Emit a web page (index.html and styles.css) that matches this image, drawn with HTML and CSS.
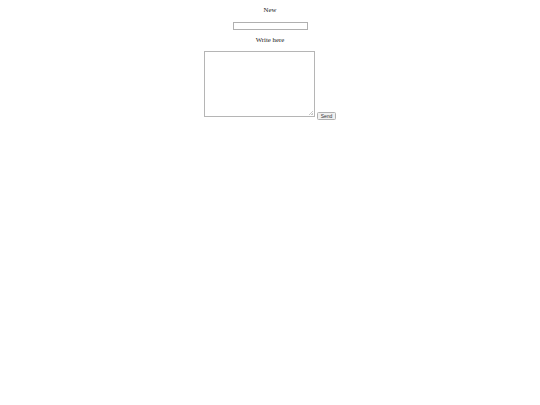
FILE: index.html
```html
<!DOCTYPE html>
<html>
<head>
<meta charset="utf-8">
<link rel="stylesheet" href="styles.css">
</head>
<body>
<div class="page">
  <p class="label label-top">New</p>
  <input class="title-input" type="text">
  <p class="label label-mid">Write here</p>
  <div class="compose">
    <div class="message-box">
      <textarea class="message"></textarea>
      <span class="grip"></span>
    </div>
    <button class="send">Send</button>
  </div>
</div>
</body>
</html>
```
FILE: styles.css
```css
html, body {
  margin: 0;
  padding: 0;
  background: #ffffff;
}
.page {
  width: 540px;
  display: flex;
  flex-direction: column;
  align-items: center;
  font-family: "Liberation Serif", "Times New Roman", serif;
  color: #222;
}
.label {
  margin: 0;
  font-size: 6.8px;
  line-height: 8px;
  text-align: center;
}
.label-top {
  margin-top: 6px;
}
.title-input {
  box-sizing: border-box;
  width: 75px;
  height: 8px;
  margin: 8px 0 0;
  padding: 0 1px;
  border: 1px solid #b0b0b0;
  font-size: 5px;
  outline: none;
}
.label-mid {
  margin-top: 6px;
}
.compose {
  margin-top: 7px;
  display: flex;
  align-items: flex-end;
  gap: 2px;
}
.message-box {
  position: relative;
  margin-bottom: 3px;
  line-height: 0;
}
.message {
  box-sizing: border-box;
  display: block;
  width: 111px;
  height: 66px;
  margin: 0;
  padding: 1px;
  border: 1px solid #b5b5b5;
  font-size: 6px;
  outline: none;
  resize: none;
}
.grip {
  position: absolute;
  right: 2px;
  bottom: 2px;
  width: 4px;
  height: 4px;
  background: linear-gradient(135deg, transparent 45%, #c8c8c8 45%, #c8c8c8 60%, transparent 60%, transparent 75%, #c8c8c8 75%, #c8c8c8 90%, transparent 90%);
}
.send {
  box-sizing: border-box;
  width: 19px;
  height: 8px;
  padding: 0;
  border: 1px solid #b0b0b0;
  border-radius: 1.5px;
  background: #f0f0f0;
  font-family: "Liberation Sans", Arial, sans-serif;
  font-size: 5px;
  line-height: 6px;
  color: #333;
}
```
